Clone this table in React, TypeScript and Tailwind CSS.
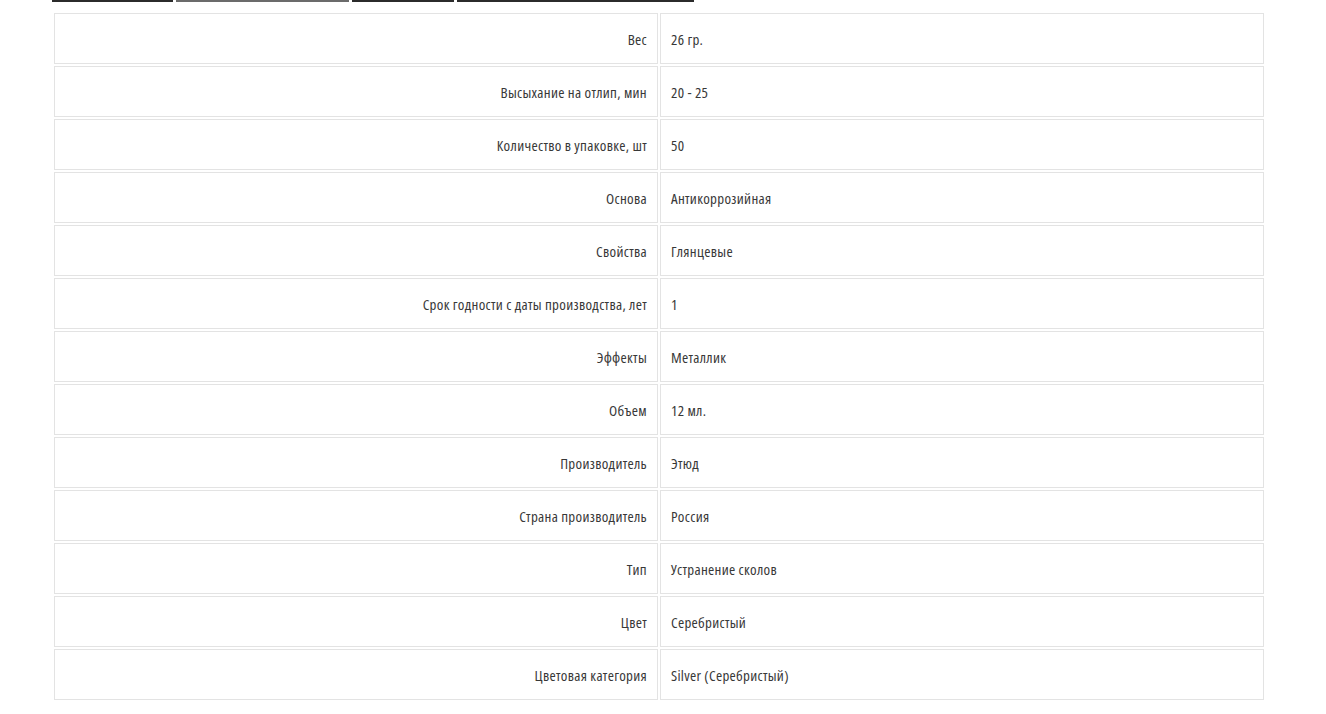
const TABS = [
  { w: "w-[121px]", color: "bg-[#2b2b2b]" },
  { w: "w-[173px]", color: "bg-[#6b6b6b]" },
  { w: "w-[102px]", color: "bg-[#2b2b2b]" },
  { w: "w-[237px]", color: "bg-[#2b2b2b]" },
];

const PROPS: [string, string][] = [
  ["Вес", "26 гр."],
  ["Высыхание на отлип, мин", "20 - 25"],
  ["Количество в упаковке, шт", "50"],
  ["Основа", "Антикоррозийная"],
  ["Свойства", "Глянцевые"],
  ["Срок годности с даты производства, лет", "1"],
  ["Эффекты", "Металлик"],
  ["Объем", "12 мл."],
  ["Производитель", "Этюд"],
  ["Страна производитель", "Россия"],
  ["Тип", "Устранение сколов"],
  ["Цвет", "Серебристый"],
  ["Цветовая категория", "Silver (Серебристый)"],
];

export default function App() {
  return (
    <div className="min-h-[714px] w-full bg-white font-['Open_Sans',sans-serif] [font-stretch:75%] text-[15px] font-normal tracking-[0.3px] text-[#383838]">
      <div className="flex gap-[3px] pl-[52px]">
        {TABS.map((t, i) => (
          <div key={i} className={`h-[2px] ${t.w} ${t.color}`} />
        ))}
      </div>

      <div className="px-[52px] pt-[9px]">
        <table className="w-[1214px] table-fixed border-separate border-spacing-[2px]">
          <tbody>
            {PROPS.map(([name, value]) => (
              <tr key={name}>
                <td className="h-[51px] w-1/2 border border-[#e3e3e3] pr-[10px] pt-[1px] text-right align-middle">
                  {name}
                </td>
                <td className="h-[51px] w-1/2 border border-[#e3e3e3] pl-[10px] pt-[1px] text-left align-middle">
                  {value}
                </td>
              </tr>
            ))}
          </tbody>
        </table>
      </div>
    </div>
  );
}
